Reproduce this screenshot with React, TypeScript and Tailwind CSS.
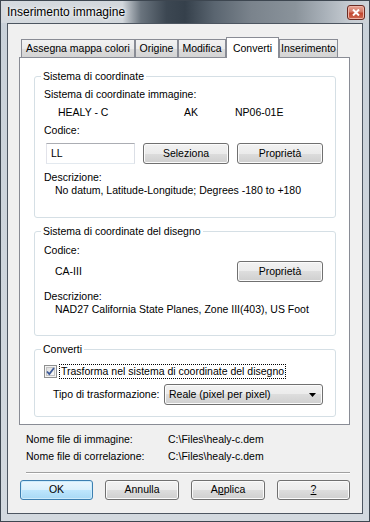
import React from "react"

const btn =
  "flex items-center justify-center rounded-[3px] border border-[#707070] bg-[linear-gradient(#f2f2f2_0%,#ebebeb_50%,#dddddd_50%,#cfcfcf_100%)] shadow-[inset_0_0_0_1px_#fbfbfb]"

const okBtn =
  "flex items-center justify-center rounded-[3px] border border-[#3c7fb1] bg-[linear-gradient(#eaf6fd_0%,#d9f0fc_50%,#bee6fd_50%,#a7d9f5_100%)] shadow-[inset_0_0_0_1px_#cdecfc]"

function Group({ title, className, children }: { title: string; className: string; children: React.ReactNode }) {
  return (
    <div className={`relative ml-[14px] w-[302px] rounded-[3px] border border-[#d5dfe5] pl-[9px] ${className}`}>
      <span className="absolute -top-[7px] left-[6px] bg-white px-[2px] leading-[13px]">{title}</span>
      {children}
    </div>
  )
}

function Tab({ label, w, selected }: { label: string; w: string; selected?: boolean }) {
  if (selected) {
    return (
      <div className={`relative z-10 -mb-px flex h-[21px] items-start justify-center border border-b-0 border-[#898c95] bg-white pt-[3px] ${w}`}>
        {label}
      </div>
    )
  }
  return (
    <div className={`flex h-[18px] items-center justify-center border border-b-0 border-[#898c95] bg-[linear-gradient(#f2f2f2,#ebebeb_50%,#dddddd_50%,#d4d4d4)] ${w}`}>
      {label}
    </div>
  )
}

export default function App() {
  return (
    <div className="flex h-[522px] w-[370px] flex-col border border-[#3d4650] bg-[linear-gradient(#c9d1d9,#d3d9df)] font-['Liberation_Sans',Arial,sans-serif] text-[10.5px] text-black">
      {/* title bar */}
      <div className="flex h-[22px] items-center bg-[linear-gradient(to_right,#d5dadf_0%,#d2d7dc_33%,#6a747e_38%,#3c4752_45%,#35404b_50%,#5a6570_58%,#7a838c_68%,#8a939b_80%,#a9b1b9_88%,#c6ccd2_95%,#cdd3d9_100%)] pl-[6px] pr-[4px]">
        <span className="text-[12px] leading-none text-black [text-shadow:0_0_6px_#ffffff,0_0_3px_#ffffff]">Inserimento immagine</span>
        <div className="ml-auto flex h-[15px] w-[18px] items-center justify-center rounded-[3px] border border-[#6a2a22] bg-[linear-gradient(#e8a393_0%,#d47a68_45%,#c1452f_55%,#cf6a52_100%)] shadow-[inset_0_0_0_1px_#eeb3a6]">
          <svg width="8" height="7" viewBox="0 0 8 7">
            <path d="M1 0.5 L7 6.5 M7 0.5 L1 6.5" stroke="#fff" strokeWidth="2" />
          </svg>
        </div>
      </div>

      {/* client */}
      <div className="mx-[6px] flex h-[491px] flex-col border border-[#4d5661] bg-[#f0f0f0]">
        {/* tabs */}
        <div className="ml-[11px] mt-[13px] flex h-[20px] items-end pl-[2px]">
          <Tab label="Assegna mappa colori" w="w-[114px]" />
          <Tab label="Origine" w="w-[43px]" />
          <Tab label="Modifica" w="w-[48px]" />
          <Tab label="Converti" w="w-[53px]" selected />
          <Tab label="Inserimento" w="w-[59px]" />
        </div>
        <div className="ml-[11px] h-[368px] w-[331px] border border-[#898c95] bg-white">
          <Group title="Sistema di coordinate" className="mt-[18px] h-[142px]">
            <div className="mt-[11px] h-[13px] leading-[13px]">Sistema di coordinate immagine:</div>
            <div className="mt-[5px] flex h-[13px] leading-[13px]">
              <span className="ml-[14px] w-[126px]">HEALY - C</span>
              <span className="w-[51px]">AK</span>
              <span>NP06-01E</span>
            </div>
            <div className="mt-[5px] h-[13px] leading-[13px]">Codice:</div>
            <div className="mt-[6px] flex h-[21px] gap-[8px]">
              <div className="ml-[2px] flex h-[21px] w-[89px] items-start border border-[#abadb3] border-b-[#e3e9ef] border-l-[#e2e3ea] border-r-[#dbdfe6] bg-white pl-[4px] pt-[2px]">
                LL
              </div>
              <div className={`${btn} h-[21px] w-[86px]`}>Seleziona</div>
              <div className={`${btn} h-[21px] w-[86px]`}>Proprietà</div>
            </div>
            <div className="mt-[7px] h-[13px] leading-[13px]">Descrizione:</div>
            <div className="ml-[11px] h-[13px] leading-[13px]">No datum, Latitude-Longitude; Degrees -180 to +180</div>
          </Group>

          <Group title="Sistema di coordinate del disegno" className="mt-[13px] h-[105px]">
            <div className="mt-[12px] h-[13px] leading-[13px]">Codice:</div>
            <div className="mt-[4px] flex h-[21px] items-center pr-[12px]">
              <span className="ml-[11px]">CA-III</span>
              <div className={`${btn} ml-auto h-[21px] w-[86px]`}>Proprietà</div>
            </div>
            <div className="mt-[8px] h-[13px] leading-[13px]">Descrizione:</div>
            <div className="ml-[11px] h-[13px] leading-[13px]">NAD27 California State Planes, Zone III(403), US Foot</div>
          </Group>

          <Group title="Converti" className="mt-[13px] h-[68px]">
            <div className="mt-[14px] flex h-[15px] items-center">
              <svg className="shrink-0" width="13" height="13" viewBox="0 0 13 13">
                <defs>
                  <linearGradient id="cb" x1="0" y1="0" x2="1" y2="1">
                    <stop offset="0" stopColor="#dcdcdc" />
                    <stop offset="1" stopColor="#fbfbfb" />
                  </linearGradient>
                </defs>
                <rect x="0.5" y="0.5" width="12" height="12" fill="#f4f4f4" stroke="#8e8f8f" />
                <rect x="2.5" y="2.5" width="8" height="8" fill="url(#cb)" stroke="#c4c4c4" />
                <path d="M3 6.5 L5.3 9 L10 3" fill="none" stroke="#3d5a98" strokeWidth="1.8" />
              </svg>
              <span className="ml-[2px] flex h-[15px] shrink-0 items-center whitespace-nowrap border border-dotted border-black pl-[1px] pr-[1px]">
                Trasforma nel sistema di coordinate del disegno
              </span>
            </div>
            <div className="mt-[5px] flex h-[21px] items-center">
              <span className="ml-[9px] w-[111px] whitespace-nowrap">Tipo di trasformazione:</span>
              <div className={`${btn} !justify-start h-[21px] w-[159px] pl-[4px]`}>
                <span>Reale (pixel per pixel)</span>
                <svg className="ml-auto mr-[6px]" width="7" height="4" viewBox="0 0 7 4">
                  <path d="M0 0 H7 L3.5 4 Z" fill="#000" />
                </svg>
              </div>
            </div>
          </Group>
        </div>

        {/* file names */}
        <div className="ml-[18px] mt-[8px] flex h-[13px] leading-[13px]">
          <span className="w-[142px]">Nome file di immagine:</span>
          <span>C:\Files\healy-c.dem</span>
        </div>
        <div className="ml-[18px] mt-[4px] flex h-[13px] leading-[13px]">
          <span className="w-[142px]">Nome file di correlazione:</span>
          <span>C:\Files\healy-c.dem</span>
        </div>
        <div className="ml-[18px] mt-[9px] h-[2px] w-[324px] border-t border-b border-t-[#a0a0a0] border-b-white" />

        {/* buttons */}
        <div className="ml-[12px] mt-[6px] flex gap-[12px]">
          <div className={`${okBtn} h-[20px] w-[73px]`}>OK</div>
          <div className={`${btn} h-[20px] w-[74px]`}>Annulla</div>
          <div className={`${btn} h-[20px] w-[74px]`}>
            <span>
              A<span className="underline">p</span>plica
            </span>
          </div>
          <div className={`${btn} h-[20px] w-[73px]`}>
            <span className="underline">?</span>
          </div>
        </div>
      </div>
    </div>
  )
}
